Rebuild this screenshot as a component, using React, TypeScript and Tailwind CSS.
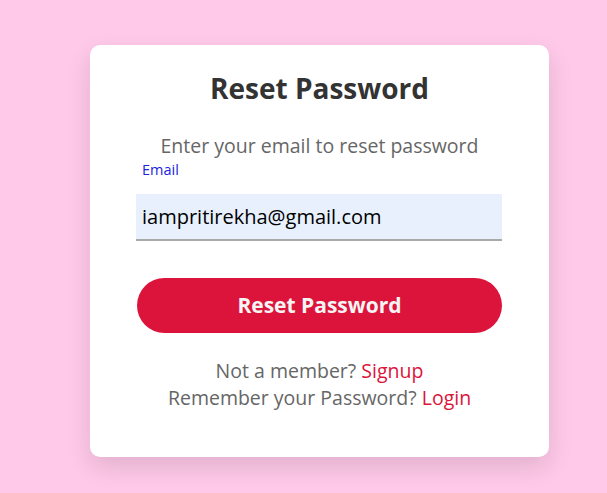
export default function App() {
  return (
    <div
      className="min-h-[493px] w-full bg-[#ffc9e9] pl-[90px] pt-[45px]"
      style={{ fontFamily: '"Open Sans", "Noto Sans", sans-serif' }}
    >
      <div className="flex h-[412px] w-[459px] flex-col rounded-[10px] bg-white pt-[24px] shadow-[0_10px_25px_rgba(0,0,0,0.12)]">
        <h1 className="text-center text-[28px] font-bold leading-[38px] text-[#333333]">
          Reset Password
        </h1>
        <p className="mt-[26px] text-center text-[19.5px] leading-[26px] text-[#666666]">
          Enter your email to reset password
        </p>
        <div className="mt-[2px] pl-[46px] pr-[47px]">
          <label className="block pl-[6px] text-[14.5px] leading-[18px] text-[#2222dd]">Email</label>
          <div className="mt-[15px] flex h-[47px] items-center border-b-2 border-[#a9a9a9] bg-[#e8f0fe] pl-[6px] text-[20px] text-black">
            iampritirekha@gmail.com
          </div>
        </div>
        <div className="mt-[37px] px-[47px]">
          <button className="flex h-[55px] w-full items-center justify-center rounded-full bg-[#dc143c] text-[21px] font-bold text-[#f4f4f4]">
            Reset Password
          </button>
        </div>
        <div className="mt-[24px] text-center text-[19.5px] leading-[27px] text-[#666666]">
          <p>
            Not a member? <span className="text-[#dc143c]">Signup</span>
          </p>
          <p>
            Remember your Password? <span className="text-[#dc143c]">Login</span>
          </p>
        </div>
      </div>
    </div>
  );
}
